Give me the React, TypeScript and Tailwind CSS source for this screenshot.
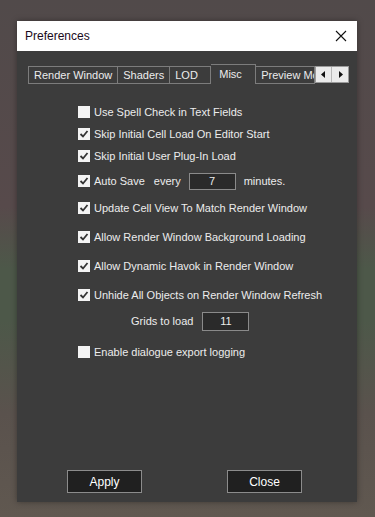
import React from "react";

const font = { fontFamily: '"Liberation Sans", Arial, sans-serif' };

function Check({ on }: { on: boolean }) {
  return (
    <div className="w-[12px] h-[12px] bg-[#f3f3f3] flex items-center justify-center shrink-0">
      {on && (
        <svg width="10" height="10" viewBox="0 0 10 10">
          <path d="M1.5 5 L4 7.5 L8.5 2" fill="none" stroke="#333" strokeWidth="1.8" />
        </svg>
      )}
    </div>
  );
}

function Row({ on, label, h }: { on: boolean; label: string; h: string }) {
  return (
    <div className={`flex items-center gap-[4px] ${h}`}>
      <Check on={on} />
      <span>{label}</span>
    </div>
  );
}

export default function App() {
  return (
    <div
      className="w-[375px] h-[517px] pt-[21px] pl-[17px] bg-[linear-gradient(180deg,#514a4a_0%,#574a4b_40%,#4d5849_52%,#4d5849_62%,#5a524d_80%,#605850_100%)] text-[11px]"
      style={font}
    >
      <div className="w-[340px] h-[481px] flex flex-col shadow-[0_0_6px_rgba(0,0,0,0.35)]">
        <div className="h-[30px] bg-white flex items-center justify-between pl-[8px] pr-[10px]">
          <span className="text-[12px] text-[#1a0a20]">Preferences</span>
          <svg width="12" height="12" viewBox="0 0 12 12">
            <path d="M1 1 L11 11 M11 1 L1 11" stroke="#111" strokeWidth="1.1" />
          </svg>
        </div>
        <div className="flex-1 bg-[#3c3c3c] flex flex-col text-[#ececec]">
          <div className="flex items-end mt-[13px] ml-[11px] h-[20px]">
            <div className="h-[18px] px-[5px] border border-[#7c7c7c] flex items-center">Render Window</div>
            <div className="h-[18px] px-[5px] border border-[#7c7c7c] border-l-0 flex items-center">Shaders</div>
            <div className="h-[18px] px-[5px] w-[41px] border border-[#7c7c7c] border-l-0 flex items-center">LOD</div>
            <div className="h-[20px] px-[8px] w-[45px] border border-b-0 border-[#7c7c7c] border-l-0 flex items-start pt-[1px]">Misc</div>
            <div className="h-[18px] pl-[5px] w-[59px] border border-[#7c7c7c] border-l-0 flex items-center overflow-hidden whitespace-nowrap">Preview Mo</div>
            <div className="h-[17px] flex mb-[1px] border border-[#9a9a9a] bg-[#ebebeb]">
              <div className="w-[16px] flex items-center justify-center border-r border-[#b8b8b8]">
                <svg width="5" height="7" viewBox="0 0 5 7"><path d="M4 0 L0 3.5 L4 7Z" fill="#111" /></svg>
              </div>
              <div className="w-[16px] flex items-center justify-center">
                <svg width="5" height="7" viewBox="0 0 5 7"><path d="M1 0 L5 3.5 L1 7Z" fill="#111" /></svg>
              </div>
            </div>
          </div>
          <div className="flex flex-col pl-[61px] mt-[17px]">
            <Row on={false} label="Use Spell Check in Text Fields" h="h-[22px]" />
            <Row on label="Skip Initial Cell Load On Editor Start" h="h-[22px]" />
            <Row on label="Skip Initial User Plug-In Load" h="h-[22px]" />
            <div className="flex items-center h-[28px]">
              <Check on />
              <span className="ml-[4px]">Auto Save</span>
              <span className="ml-[9px]">every</span>
              <div className="ml-[8px] w-[47px] h-[17px] border border-[#8a8a8a] bg-[#2a2a2a] flex items-center justify-center">7</div>
              <span className="ml-[8px]">minutes.</span>
            </div>
            <Row on label="Update Cell View To Match Render Window" h="h-[26px]" />
            <Row on label="Allow Render Window Background Loading" h="h-[32px]" />
            <Row on label="Allow Dynamic Havok in Render Window" h="h-[26px]" />
            <Row on label="Unhide All Objects on Render Window Refresh" h="h-[32px]" />
            <div className="flex items-center h-[20px] pl-[53px]">
              <span>Grids to load</span>
              <div className="ml-[9px] w-[47px] h-[19px] border border-[#8a8a8a] bg-[#2a2a2a] flex items-center justify-center">11</div>
            </div>
            <Row on={false} label="Enable dialogue export logging" h="h-[42px]" />
          </div>
          <div className="mt-auto mb-[9px] flex pl-[50px] gap-[85px] text-[12px]">
            <div className="w-[75px] h-[23px] bg-[#202020] border border-[#8c8c8c] flex items-center justify-center text-white">Apply</div>
            <div className="w-[75px] h-[23px] bg-[#202020] border border-[#8c8c8c] flex items-center justify-center text-white">Close</div>
          </div>
        </div>
      </div>
    </div>
  );
}
